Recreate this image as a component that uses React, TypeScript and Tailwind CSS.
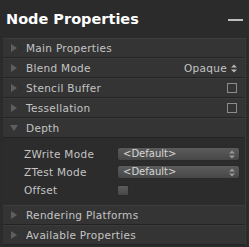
import { FC } from 'react';

const font = { fontFamily: '"DejaVu Sans", sans-serif' };

const Arrow: FC<{ open?: boolean }> = ({ open }) => (
  <svg width="8" height="8" viewBox="0 0 8 8" className="shrink-0">
    {open ? <path d="M0 1 L8 1 L4 7 Z" fill="#5e5e5e" /> : <path d="M1 0 L7 4 L1 8 Z" fill="#5e5e5e" />}
  </svg>
);

const UpDown: FC<{ color?: string }> = ({ color = '#b8b8b8' }) => (
  <svg width="6" height="9" viewBox="0 0 6 9" className="shrink-0">
    <path d="M0 3.5 L3 0.5 L6 3.5 Z M0 5.5 L3 8.5 L6 5.5 Z" fill={color} />
  </svg>
);

const Section: FC<{ label: string; open?: boolean; right?: React.ReactNode }> = ({ label, open, right }) => (
  <div className="flex h-[20px] items-center border-t border-t-[#3c3c3c] border-b border-b-[#232323] bg-[#343434] pl-[7px] pr-[8px]">
    <Arrow open={open} />
    <span className="ml-[8px] flex-1 text-[10.5px] leading-none tracking-[0.3px] text-[#c4c4c4]">{label}</span>
    {right}
  </div>
);

const Check = () => <div className="h-[10px] w-[10px] border border-[#8a8a8a]" />;

const Dropdown = () => (
  <div className="flex h-[14px] w-[123px] items-center justify-between rounded-[3px] border border-[#2a2a2a] bg-gradient-to-b from-[#5c5c5c] to-[#474747] pl-[5px] pr-[4px]">
    <span className="text-[10px] leading-none text-[#d6d6d6]">&lt;Default&gt;</span>
    <UpDown color="#9a9a9a" />
  </div>
);

const Field: FC<{ label: string; children: React.ReactNode }> = ({ label, children }) => (
  <div className="flex h-[18px] items-center">
    <span className="w-[93px] text-[10.5px] leading-none tracking-[0.3px] text-[#c4c4c4]">{label}</span>
    {children}
  </div>
);

export default function App() {
  return (
    <div className="h-[247px] w-[249px] overflow-hidden bg-[#2b2b2b]" style={font}>
      <div className="flex h-[38px] items-center justify-between pl-[6px] pr-[6px] pt-[1px]">
        <span className="text-[14.5px] font-bold leading-none text-white">Node Properties</span>
        <div className="h-[2px] w-[15px] bg-[#bdbdbd]" />
      </div>
      <div className="mx-[3px] border-r border-r-[#3a3a3a]">
        <Section label="Main Properties" />
        <Section
          label="Blend Mode"
          right={
            <div className="flex items-center gap-[4px]">
              <span className="text-[10.5px] leading-none tracking-[0.3px] text-[#c4c4c4]">Opaque</span>
              <UpDown />
            </div>
          }
        />
        <Section label="Stencil Buffer" right={<Check />} />
        <Section label="Tessellation" right={<Check />} />
        <Section label="Depth" open />
        <div className="flex h-[67px] flex-col bg-[#2c2c2c] pt-[7px] pl-[21px]">
          <Field label="ZWrite Mode">
            <Dropdown />
          </Field>
          <Field label="ZTest Mode">
            <Dropdown />
          </Field>
          <Field label="Offset">
            <div className="h-[11px] w-[12px] rounded-[2px] border border-[#2a2a2a] bg-gradient-to-b from-[#5c5c5c] to-[#484848]" />
          </Field>
        </div>
        <Section label="Rendering Platforms" />
        <Section label="Available Properties" />
      </div>
    </div>
  );
}
